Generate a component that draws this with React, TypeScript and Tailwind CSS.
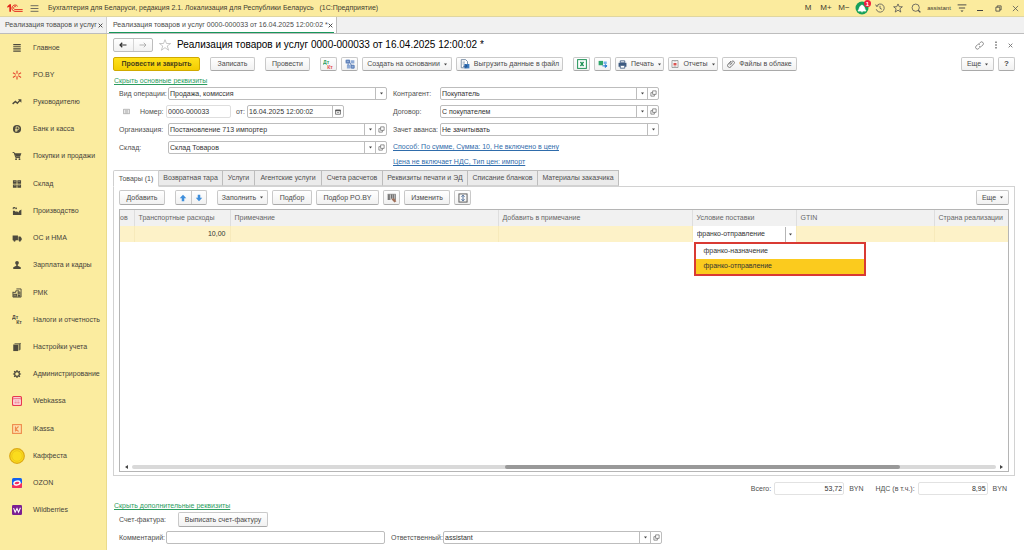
import React from 'react';

type IconProps = { className?: string; children: React.ReactNode; box?: string };
const Svg = ({ className = 'size-[10px]', children, box = '0 0 16 16' }: IconProps) => (
  <svg viewBox={box} className={`shrink-0 ${className}`} fill="none" aria-hidden="true">
    {children}
  </svg>
);

const dark = '#4d4a3d';

const Logo = () => (
  <Svg box="0 0 48 30" className="h-[10px] w-4">
    <path d="M1 10L8 4H12V26H7V11L1 14Z" fill="#e2231a" />
    <path d="M32 10A9.500 9.500 0 1 0 24 25H47" stroke="#e2231a" strokeWidth="3" />
    <path d="M27.500 12A4.500 4.500 0 1 0 24 19.500H47" stroke="#e2231a" strokeWidth="2.500" />
  </Svg>
);

const DtKt = ({ top, bottom }: { top: string; bottom: string }) => (
  <Svg className="size-[11px]">
    <text x="0" y="7" fontSize="7.5" fontWeight="bold" fontFamily="Liberation Sans, sans-serif" fill={top}>Дт</text>
    <text x="6" y="15" fontSize="7.5" fontWeight="bold" fontFamily="Liberation Sans, sans-serif" fill={bottom}>Кт</text>
  </Svg>
);

const Caret = ({ className = 'h-[3px] w-[3px]' }: { className?: string }) => (
  <Svg box="0 0 8 6" className={className}>
    <path d="M0 0.5 H8 L4 5.5 Z" fill="#444" />
  </Svg>
);

const OpenIcon = () => (
  <Svg className="size-[7px]">
    <path d="M6 2 H14 V10 H6 Z M6 6 H2 V14 H10 V10" stroke="#666" strokeWidth="1.6" />
  </Svg>
);

const sections: { name: string; icon: React.ReactNode }[] = [
  { name: 'Главное', icon: <Svg><path d="M2 2.5H14M2 6H14M2 9.5H14M2 13H14" stroke={dark} strokeWidth="1.9" /></Svg> },
  { name: 'PO.BY', icon: <Svg><path d="M8 1V6M8 15V10M1.500 4.500L6 7M14.500 4.500L10 7M1.500 12L6 9M14.500 12L10 9" stroke="#e5432d" strokeWidth="1.8" /></Svg> },
  { name: 'Руководителю', icon: <Svg><path d="M1 11L5.500 7L8.500 10L13 5" stroke={dark} strokeWidth="2.200" /><path d="M9.500 3.500H15V9Z" fill={dark} /></Svg> },
  { name: 'Банк и касса', icon: <Svg><circle cx="8" cy="8" r="6.500" fill={dark} /><path d="M6.500 12.500V4.500H9A2.200 2.200 0 0 1 9 9H5M5 10.800H9" stroke="#fbec9f" strokeWidth="1.300" /></Svg> },
  { name: 'Покупки и продажи', icon: <Svg><path d="M1 2.500H3.500L6 10.500H13" stroke={dark} strokeWidth="1.600" /><path d="M4 3.500H15L13 9H6Z" fill={dark} /><circle cx="6.500" cy="13" r="1.500" fill={dark} /><circle cx="12" cy="13" r="1.500" fill={dark} /></Svg> },
  { name: 'Склад', icon: <Svg><path d="M1.500 2H7.400V7.400H1.500ZM8.600 2H14.500V7.400H8.600ZM1.500 8.600H7.400V14H1.500ZM8.600 8.600H14.500V14H8.600Z" fill={dark} /><path d="M3 4H6M10 4H13M3 10.500H6M10 10.500H13" stroke="#a39c72" /></Svg> },
  { name: 'Производство', icon: <Svg><path d="M1.500 14.500V7.500H4L7 10V8L11 10.500V8L15 5.500V14.500Z" fill={dark} /><path d="M2 5V2.500H5V5M7 2.500V5" stroke={dark} strokeWidth="1.600" /></Svg> },
  { name: 'ОС и НМА', icon: <Svg><path d="M1 4H9.500V11.500H1ZM10.300 5.500H13.500L15.500 8.500V11.500H10.300Z" fill={dark} /><circle cx="4" cy="12" r="1.800" fill={dark} /><circle cx="12.500" cy="12" r="1.800" fill={dark} /></Svg> },
  { name: 'Зарплата и кадры', icon: <Svg><circle cx="8" cy="4.500" r="3" fill={dark} /><path d="M6.800 6H9.200V9L14 11.500V14.500H2V11.500L6.800 9Z" fill={dark} /></Svg> },
  { name: 'РМК', icon: <Svg><path d="M1.500 7H6V4.500H11V7M7 1.500H14.500V14.500H1.500V6" stroke={dark} strokeWidth="1.500" /><path d="M2 9H8V14H2ZM9 6H13.500V14H9Z" fill={dark} /><path d="M10 8H13M10 10.500H13M3 11.500H7" stroke="#d8cc8c" /></Svg> },
  { name: 'Налоги и отчетность', icon: <DtKt top={dark} bottom={dark} /> },
  { name: 'Настройки учета', icon: <Svg><path d="M2 4H10V14.500H2Z" fill={dark} /><path d="M3 3L5 1.500H14V12L11 14V4" fill="#8a845f" /><path d="M11.500 13V3.500L14 2" stroke={dark} /></Svg> },
  { name: 'Администрирование', icon: <Svg><circle cx="8" cy="8" r="3.800" stroke={dark} strokeWidth="2" /><path d="M8 1.500V4M8 12V14.500M1.500 8H4M12 8H14.500M3.400 3.400L5 5M11 11L12.600 12.600M3.400 12.600L5 11M11 5L12.600 3.400" stroke={dark} strokeWidth="1.900" /></Svg> },
  { name: 'Webkassa', icon: <Svg><rect x="1" y="1" width="14" height="14" rx="1.500" fill="#fff" stroke="#e8384f" strokeWidth="2" /><path d="M2 4.500H14" stroke="#e8384f" strokeWidth="1.500" /><path d="M4 8H12M4 11H12" stroke="#e8384f" strokeWidth="1.800" strokeDasharray="2 1" /></Svg> },
  { name: 'iKassa', icon: <Svg><rect x="1" y="1" width="14" height="14" fill="#fde3b0" stroke="#ef8a4a" strokeWidth="1.800" /><path d="M5.500 4V12M10.500 4L6 8L10.500 12" stroke="#ef8a4a" strokeWidth="1.800" /></Svg> },
  { name: 'Каффеста', icon: <Svg className="size-4"><circle cx="8" cy="8" r="7.300" fill="#fbdc1d" stroke="#dca816" strokeWidth="1.200" /><circle cx="8" cy="8" r="5.300" stroke="#e8bd1a" strokeWidth="0.700" /></Svg> },
  { name: 'OZON', icon: <Svg><rect width="16" height="16" rx="2.500" fill="#1261ee" /><path d="M0 11L16 8V13.500A2.500 2.500 0 0 1 13.500 16H2.500A2.500 2.500 0 0 1 0 13.500Z" fill="#f5305d" /><ellipse cx="8" cy="8" rx="5" ry="3" fill="#f5305d" stroke="#fff" strokeWidth="2.200" transform="rotate(-12 8 8)" /></Svg> },
  { name: 'Wildberries', icon: <Svg><rect width="16" height="16" rx="2" fill="#7b1f92" /><path d="M2.500 5L5 11.500L8 5.500L10.500 11.500L13.500 4.500" stroke="#fff" strokeWidth="1.700" /></Svg> },
];

const buttonBase =
  'flex shrink-0 items-center justify-center gap-1 rounded-[2px] border border-[#c9c9c9] border-b-[#a9a9a9] bg-linear-to-b from-white to-[#f1f1f1] h-[14px] whitespace-nowrap text-[#4a4a4a]';

type ButtonProps = { className: string; children: React.ReactNode; label?: string };
const Button = ({ className, children, label }: ButtonProps) => (
  <button type="button" aria-label={label} className={`${buttonBase} ${className}`}>
    {children}
  </button>
);

type FieldProps = { id: string; label: string; value: string; open?: boolean; labelClass: string };
const SelectField = ({ id, label, value, open, labelClass }: FieldProps) => (
  <div className="flex h-[13px] items-center">
    <label htmlFor={id} className={`shrink-0 whitespace-nowrap ${labelClass}`}>{label}</label>
    <div className="flex h-[13px] min-w-0 flex-1 rounded-[2px] border border-[#bdbdbd] bg-white">
      <div className="grid min-w-0 flex-1 grid-cols-[1fr_11px]">
        <select id={id} className="col-span-2 col-start-1 row-start-1 w-full appearance-none bg-transparent px-px text-[#333] outline-none">
          <option>{value}</option>
        </select>
        <span className="pointer-events-none col-start-2 row-start-1 flex items-center justify-center border-l border-[#bdbdbd]">
          <Caret />
        </span>
      </div>
      {open && (
        <button type="button" aria-label={`Открыть: ${label}`} className="flex w-[11px] items-center justify-center border-l border-[#bdbdbd]">
          <OpenIcon />
        </button>
      )}
    </div>
  </div>
);

const TitleBar = () => (
  <header className="flex h-[17px] shrink-0 items-center border-b border-[#e0d6a0] bg-[#fbeb9e] text-[#3f3c30]">
    <div className="flex w-12 items-center gap-[7px] pl-[7px]">
      <Logo />
      <button type="button" aria-label="Главное меню"><Svg className="size-[9px]"><path d="M1 3H15M1 8H15M1 13H15" stroke="#555" strokeWidth="1.500" /></Svg></button>
    </div>
    <span className="whitespace-pre">Бухгалтерия для Беларуси, редакция 2.1. Локализация для Республики Беларусь   (1С:Предприятие)</span>
    <div className="ml-auto flex items-center text-[8px]">
      <button type="button" className="w-[18px]">M</button>
      <button type="button" className="w-[18px]">M+</button>
      <button type="button" className="w-[18px]">M−</button>
      <button type="button" aria-label="Уведомления" className="relative flex w-[18px] justify-center">
        <Svg className="size-[14px]" box="0 0 28 28">
          <circle cx="14" cy="14" r="13" fill="#17a05a" />
          <path d="M6 20C9 17 8 10 14 8C20 10 19 17 22 20ZM12 21.500H16" fill="#fff" stroke="#fff" strokeWidth="1.500" />
        </Svg>
        <span className="absolute -top-px right-0 flex size-[7px] items-center justify-center rounded-full bg-[#ef1c3d] text-[6px] leading-none font-bold text-white">1</span>
      </button>
      <button type="button" aria-label="История" className="flex w-[18px] justify-center"><Svg><path d="M2.500 5A6.500 6.500 0 1 1 2 10M1 2.500L2.500 5.500L5.500 4.500M8 4.500V8.500L11 10" stroke="#555" strokeWidth="1.300" /></Svg></button>
      <button type="button" aria-label="Избранное" className="flex w-[18px] justify-center"><Svg><path d="M8 1.500L10 6H15L11 9.300L12.500 14.500L8 11.500L3.500 14.500L5 9.300L1 6H6Z" stroke="#555" strokeWidth="1.300" /></Svg></button>
      <button type="button" aria-label="Поиск" className="flex w-[18px] justify-center"><Svg><circle cx="7.500" cy="7.500" r="5.800" stroke="#555" strokeWidth="1.300" /><path d="M11.500 11.500L15 15" stroke="#555" strokeWidth="2.200" /></Svg></button>
      <a href="#user" className="w-7 text-center text-[6px]">assistant</a>
      <button type="button" aria-label="Настройки" className="flex w-[18px] justify-center"><Svg><path d="M1 3H15M3 8H13" stroke="#444" strokeWidth="1.500" /><path d="M5.500 12H10.500L8 14.500Z" fill="#444" /></Svg></button>
      <button type="button" aria-label="Свернуть" className="flex w-[18px] justify-center"><Svg className="size-2"><path d="M2 13H14" stroke="#444" strokeWidth="2" /></Svg></button>
      <button type="button" aria-label="Развернуть" className="flex w-[18px] justify-center"><Svg className="size-[7px]"><path d="M2 5H11V14H2ZM5 5V2H14V11H11" stroke="#444" strokeWidth="1.800" /></Svg></button>
      <button type="button" aria-label="Закрыть окно" className="flex w-[17px] justify-center"><Svg className="size-[7px]"><path d="M2 2L14 14M14 2L2 14" stroke="#555" strokeWidth="1.800" /></Svg></button>
    </div>
  </header>
);

const Cross = ({ label, color = '#444' }: { label: string; color?: string }) => (
  <button type="button" aria-label={label} className="flex items-center">
    <Svg className="size-[5px]"><path d="M2 2L14 14M14 2L2 14" stroke={color} strokeWidth="3" /></Svg>
  </button>
);

const WindowTabs = () => (
  <nav className="flex h-[17px] shrink-0 border-b border-[#bdbdbd] bg-[#f1f1f1] text-[#4a4a4a]">
    <div className="flex w-[107px] items-center justify-between border-r border-[#cfcfcf] pr-[3px] pl-[5px]">
      <a href="#list" className="whitespace-nowrap">Реализация товаров и услуг</a>
      <Cross label="Закрыть список" />
    </div>
    <div className="flex w-[230px] border-r border-[#bdbdbd] bg-white px-[2px]">
      <div className="flex flex-1 items-center justify-between border-b border-[#17975a] pt-px pr-px pl-1">
        <a href="#document" className="whitespace-nowrap">Реализация товаров и услуг 0000-000033 от 16.04.2025 12:00:02 *</a>
        <Cross label="Закрыть документ" />
      </div>
    </div>
  </nav>
);

const Sidebar = () => (
  <nav className="flex w-[107px] shrink-0 flex-col border-r border-[#eadb8c] bg-[#fbec9f] pb-[26px] text-[#45423a]">
    {sections.map((s) => (
      <a key={s.name} href="#section" className="flex min-h-4 flex-1 items-center">
        <span className="flex w-[33px] shrink-0 justify-center pl-px">{s.icon}</span>
        <span className="whitespace-nowrap">{s.name}</span>
      </a>
    ))}
  </nav>
);

const DocumentHeader = () => (
  <div className="flex h-[14px] items-center pr-[10px]">
    <div className="flex h-[14px] w-10 rounded-[2px] border border-[#bdbdbd] bg-linear-to-b from-white to-[#f1f1f1]">
      <button type="button" aria-label="Назад" className="flex flex-1 items-center justify-center border-r border-[#d5d5d5]"><Svg className="size-2"><path d="M15 8H2M6.500 3.500L2 8L6.500 12.500" stroke="#333" strokeWidth="2.400" /></Svg></button>
      <button type="button" aria-label="Вперед" className="flex flex-1 items-center justify-center"><Svg className="size-2"><path d="M1 8H14M9.500 3.500L14 8L9.500 12.500" stroke="#aaa" strokeWidth="1.800" /></Svg></button>
    </div>
    <button type="button" aria-label="В избранное" className="ml-[6px]"><Svg className="size-3"><path d="M8 1L10 6H15.500L11 9.300L12.800 15L8 11.500L3.200 15L5 9.300L0.500 6H6Z" stroke="#b5b5b5" strokeWidth="1" /></Svg></button>
    <h1 className="ml-[6px] text-[10px] leading-[14px] whitespace-nowrap text-black">Реализация товаров и услуг 0000-000033 от 16.04.2025 12:00:02 *</h1>
    <div className="ml-auto flex items-center gap-[10px] pr-px">
      <button type="button" aria-label="Ссылка"><Svg className="size-[9px]"><path d="M7 5L9.500 2.500A3 3 0 0 1 14 7L11.500 9.500A3 3 0 0 1 7.500 9.500M9 11L6.500 13.500A3 3 0 0 1 2 9L4.500 6.500A3 3 0 0 1 8.500 6.500" stroke="#666" strokeWidth="1.300" /></Svg></button>
      <button type="button" aria-label="Меню"><Svg className="h-2 w-1" box="0 0 8 16"><path d="M4 1V4M4 6.500V9.500M4 12V15" stroke="#555" strokeWidth="2.500" /></Svg></button>
      <Cross label="Закрыть" color="#777" />
    </div>
  </div>
);

const CommandBar = () => (
  <div className="mt-[5px] flex h-[14px] items-center gap-1 pr-[9px]">
    <button type="button" className="mr-[6px] h-[14px] w-[87px] shrink-0 rounded-[2px] border border-[#d0a900] bg-linear-to-b from-[#ffe11a] to-[#f3cd00] font-bold whitespace-nowrap text-[#4b4218]">Провести и закрыть</button>
    <Button className="mr-[6px] w-[45px]">Записать</Button>
    <Button className="mr-[6px] w-[45px]">Провести</Button>
    <Button className="w-[17px]" label="Движения документа"><DtKt top="#2e9e5b" bottom="#e5494d" /></Button>
    <Button className="w-[17px]" label="Структура подчиненности">
      <Svg><path d="M1 1H8V7H1ZM9 2H15V7H9ZM3 9H9V15H3ZM10 10H15V15H10Z" fill="#8fabd6" /><path d="M2 2H7V6H2ZM10 10H14.500V14.500H10ZM5 7V10M7 5L11 11" stroke="#5579b2" strokeWidth="1.500" /></Svg>
    </Button>
    <Button className="w-[90px]">Создать на основании <Caret /></Button>
    <Button className="mr-[6px] w-[107px]">
      <Svg><path d="M2 1H9L12 4V14H2Z" fill="#fff" stroke="#55708f" strokeWidth="1.200" /><path d="M4 5H8M4 8H8" stroke="#55708f" /><path d="M7 8H15V15H7Z" fill="#3c7bc0" /><path d="M5 11.500H10M8.500 9L11.500 11.500L8.500 14" stroke="#1f4e86" strokeWidth="1.500" /></Svg>
      Выгрузить данные в файл
    </Button>
    <Button className="w-[17px]" label="Excel"><Svg><rect x="1" y="1" width="14" height="14" fill="#fff" stroke="#1f9257" strokeWidth="1.600" /><path d="M5.500 4.500L10.500 11.500M10.500 4.500L5.500 11.500" stroke="#1f9257" strokeWidth="2.300" /></Svg></Button>
    <Button className="w-[17px]" label="Обмен"><Svg><path d="M1 3H8V10H1Z" fill="#2ea66a" /><path d="M9 4H14V8H9Z" fill="#74b3e8" /><path d="M7 11H12M11.500 9L14.500 11L11.500 13.500Z" stroke="#2b7fd0" strokeWidth="1.600" fill="#2b7fd0" /></Svg></Button>
    <Button className="w-[49px]">
      <Svg className="size-[9px]"><path d="M4 1.500H12V5H4Z" fill="#fff" stroke="#3d5a80" strokeWidth="1.500" /><path d="M1 5H15V12H1Z" fill="#3d5a80" /><path d="M4 9.500H12V14.500H4Z" fill="#fff" stroke="#3d5a80" strokeWidth="1.500" /></Svg>
      Печать <Caret />
    </Button>
    <Button className="w-[50px]">
      <Svg className="size-2"><path d="M2 1H14V15H2Z" fill="#fff" stroke="#888" strokeWidth="1.500" /><path d="M5 6H11V11H5Z" fill="#d9534f" /><path d="M5 3.500H11M5 13H11" stroke="#999" /></Svg>
      Отчеты <Caret />
    </Button>
    <Button className="w-[75px]">
      <Svg className="size-2"><path d="M4 9L9.500 3A2.800 2.800 0 0 1 14 7L8 13.500A3.800 3.800 0 0 1 2 8.500L8 2M6 10.500L11 5" stroke="#555" strokeWidth="1.500" /></Svg>
      Файлы в облаке
    </Button>
    <Button className="ml-auto w-[33px]">Еще <Caret /></Button>
    <Button className="w-[17px] text-[8px] font-bold" label="Справка">?</Button>
  </div>
);

const Requisites = () => (
  <div className="mt-px grid grid-cols-[268px_266px] gap-x-[6px] pl-[6px]">
    <div className="flex flex-col gap-[5px]">
      <SelectField id="operation" label="Вид операции:" value="Продажа, комиссия" labelClass="w-[49px]" />
      <div className="flex h-[13px] items-center">
        <span className="flex w-[21px] pl-1"><Svg className="size-[7px]"><path d="M1 3H15V13H1Z" fill="#f3f3f3" stroke="#999" strokeWidth="1.500" /><path d="M4 6H12M4 8.500H12M4 11H12" stroke="#888" /></Svg></span>
        <label htmlFor="number" className="w-[26px]">Номер:</label>
        <input id="number" defaultValue="0000-000033" className="h-[13px] w-[65px] rounded-[2px] border border-[#dedede] px-px text-[#333]" />
        <label htmlFor="date" className="w-4 pl-[5px]">от:</label>
        <div className="flex h-[13px] w-[97px] rounded-[2px] border border-[#bdbdbd]">
          <input id="date" defaultValue="16.04.2025 12:00:02" className="min-w-0 flex-1 px-px text-[#333]" />
          <button type="button" aria-label="Календарь" className="flex w-[11px] items-center justify-center border-l border-[#bdbdbd]"><Svg className="size-[6px]"><path d="M1.500 3H14.500V14H1.500Z" stroke="#555" strokeWidth="2" /><path d="M1 4H15" stroke="#555" strokeWidth="4" /><path d="M5 9.500H11" stroke="#777" strokeWidth="2" /></Svg></button>
        </div>
      </div>
      <SelectField id="organization" label="Организация:" value="Постановление 713 импортер" labelClass="w-[49px]" open />
      <SelectField id="warehouse" label="Склад:" value="Склад Товаров" labelClass="w-[49px]" open />
    </div>
    <div className="flex flex-col gap-[5px]">
      <SelectField id="contractor" label="Контрагент:" value="Покупатель" labelClass="w-[47px]" open />
      <SelectField id="contract" label="Договор:" value="С покупателем" labelClass="w-[47px]" open />
      <SelectField id="advance" label="Зачет аванса:" value="Не зачитывать" labelClass="w-[47px]" />
      <div className="flex flex-col items-start gap-[5px] pt-px text-[#2f6cab] underline">
        <a href="#method" className="leading-[10px]">Способ: По сумме, Сумма: 10, Не включено в цену</a>
        <a href="#price" className="leading-[10px]">Цена не включает НДС, Тип цен: импорт</a>
      </div>
    </div>
  </div>
);

const pages = [
  { name: 'Товары (1)', width: 'w-[46px]' },
  { name: 'Возвратная тара', width: 'w-[65px]' },
  { name: 'Услуги', width: 'w-[33px]' },
  { name: 'Агентские услуги', width: 'w-[68px]' },
  { name: 'Счета расчетов', width: 'w-[62px]' },
  { name: 'Реквизиты печати и ЭД', width: 'w-[86px]' },
  { name: 'Списание бланков', width: 'w-[71px]' },
  { name: 'Материалы заказчика', width: 'w-[82px]' },
];

const PageTabs = () => (
  <div role="tablist" className="relative flex pr-[9px]">
    {pages.map((p, i) => (
      <button
        key={p.name}
        type="button"
        role="tab"
        aria-selected={i === 0}
        className={`-mr-px border whitespace-nowrap ${p.width} ${i === 0 ? 'z-10 -mb-px h-[17px] rounded-tl-[2px] border-[#cfcfcf] border-b-white bg-white' : 'h-4 border-[#bdbdbd] border-b-[#d2d2d2] bg-[#ebebeb]'}`}
      >
        {p.name}
      </button>
    ))}
  </div>
);

const BlueArrow = ({ down }: { down?: boolean }) => (
  <Svg className="size-2">
    <path d={down ? 'M5.500 1.500H10.500V7.500H14.500L8 14.500L1.500 7.500H5.500Z' : 'M5.500 14.500H10.500V8.500H14.500L8 1.500L1.500 8.500H5.500Z'} fill="#3f8fdc" />
  </Svg>
);

const GoodsBar = () => (
  <div className="flex h-[15px] items-center gap-1">
    <Button className="mr-[6px] h-[15px] w-[46px]">Добавить</Button>
    <div className="mr-[6px] flex h-[15px] w-8 rounded-[2px] border border-[#c9c9c9] border-b-[#a9a9a9] bg-linear-to-b from-white to-[#f1f1f1]">
      <button type="button" aria-label="Вверх" className="flex flex-1 items-center justify-center border-r border-[#c9c9c9]"><BlueArrow /></button>
      <button type="button" aria-label="Вниз" className="flex flex-1 items-center justify-center"><BlueArrow down /></button>
    </div>
    <Button className="h-[15px] w-[51px]">Заполнить <Caret /></Button>
    <Button className="h-[15px] w-10">Подбор</Button>
    <Button className="h-[15px] w-[63px]">Подбор PO.BY</Button>
    <Button className="h-[15px] w-[17px]" label="Штрихкод"><Svg><path d="M2 2V11M4.500 2V11M7.500 2V9M10 2V9M13 2V11" stroke="#555" strokeWidth="1.700" /><path d="M1 2H14" stroke="#777" /><path d="M7 10L11 8L15 13L12 15Z" fill="#a0705a" /></Svg></Button>
    <Button className="h-[15px] w-[46px]">Изменить</Button>
    <Button className="h-[15px] w-[17px]" label="Высота строк"><Svg><rect x="1.500" y="1.500" width="13" height="13" stroke="#555" strokeWidth="1.500" /><path d="M8 3.500V12.500M5.500 6L8 3.500L10.500 6M5.500 10L8 12.500L10.500 10" stroke="#3b5f8f" strokeWidth="1.400" /></Svg></Button>
    <Button className="ml-auto h-[15px] w-[33px]">Еще <Caret /></Button>
  </div>
);

const GoodsTable = () => (
  <div className="mt-1 flex flex-1 flex-col border border-[#b5b5b5] bg-white">
    <table className="w-full table-fixed border-collapse text-left">
      <colgroup>
        <col className="w-[14px]" />
        <col className="w-[96px]" />
        <col />
        <col className="w-[194px]" />
        <col className="w-[104px]" />
        <col className="w-[138px]" />
        <col className="w-[74px]" />
      </colgroup>
      <thead>
        <tr className="h-4 bg-[#f1f1f1] text-[#666] [&>th]:border-r [&>th]:border-[#dedede] [&>th]:p-0 [&>th]:pl-1 [&>th]:font-normal [&>th]:whitespace-nowrap [&>th:last-child]:border-r-0">
          <th><span className="-ml-1">ов</span></th>
          <th>Транспортные расходы</th>
          <th>Примечание</th>
          <th>Добавить в примечание</th>
          <th>Условие поставки</th>
          <th>GTIN</th>
          <th>Страна реализации</th>
        </tr>
      </thead>
      <tbody>
        <tr className="h-4 bg-[#fdf2c8] text-[#333] [&>td]:border-r [&>td]:border-[#f7eabb] [&>td]:p-0 [&>td:last-child]:border-r-0">
          <td />
          <td><div className="pr-1 text-right">10,00</div></td>
          <td />
          <td />
          <td className="bg-white">
            <div className="relative flex h-[15px]">
              <input aria-label="Условие поставки" role="combobox" aria-expanded="true" aria-controls="terms" defaultValue="франко-отправление" className="min-w-0 flex-1 pl-1 outline-none" />
              <button type="button" aria-label="Выбрать" className="flex w-[11px] items-center justify-center border-l border-[#b5b5b5]"><Caret /></button>
              <ul id="terms" role="listbox" className="absolute top-[15px] left-px z-20 w-[172px] border-2 border-[#d93a33] bg-white">
                <li role="option" aria-selected="false" className="flex h-[15px] items-center pl-2">франко-назначение</li>
                <li role="option" aria-selected="true" className="flex h-[15px] items-center bg-[#fbcb1e] pl-2">франко-отправление</li>
              </ul>
            </div>
          </td>
          <td />
          <td />
        </tr>
      </tbody>
    </table>
    <div className="mt-auto flex h-2 items-center gap-1 px-[5px]">
      <Svg className="h-1 w-[3px]" box="0 0 6 8"><path d="M6 0V8L0 4Z" fill="#444" /></Svg>
      <div className="grid h-1 flex-1 grid-cols-[374fr_397fr_96fr] rounded-full bg-[#d9d9d9]">
        <div className="col-start-2 rounded-full bg-[#999]" />
      </div>
      <Svg className="h-1 w-[3px]" box="0 0 6 8"><path d="M0 0V8L6 4Z" fill="#444" /></Svg>
    </div>
  </div>
);

const Totals = () => (
  <div className="mt-[6px] flex h-[13px] items-center justify-end pr-[17px]">
    <label htmlFor="total">Всего:</label>
    <input id="total" readOnly defaultValue="53,72" className="ml-[3px] h-[13px] w-[70px] rounded-[2px] border border-[#e2e2e2] px-px text-right text-[#333]" />
    <span className="ml-[5px]">BYN</span>
    <label htmlFor="vat" className="ml-3">НДС (в т.ч.):</label>
    <input id="vat" readOnly defaultValue="8,95" className="ml-[3px] h-[13px] w-[70px] rounded-[2px] border border-[#e2e2e2] px-px text-right text-[#333]" />
    <span className="ml-[5px]">BYN</span>
  </div>
);

export default function App() {
  return (
    <div className="flex min-h-screen flex-col overflow-x-hidden bg-white font-['Liberation_Sans',sans-serif] text-[7px] leading-[10px] text-[#4f4f4f]">
      <TitleBar />
      <WindowTabs />
      <div className="flex flex-1">
        <Sidebar />
        <main className="flex min-w-0 flex-1 flex-col pt-1 pb-[6px] pl-[6px]">
          <DocumentHeader />
          <CommandBar />
          <a href="#main-details" className="mt-[5px] self-start pl-px text-[#2c9d5f] underline">Скрыть основные реквизиты</a>
          <Requisites />
          <div className="mt-[3px] flex flex-1 flex-col">
            <PageTabs />
            <section className="mr-[9px] flex flex-1 flex-col border border-[#d2d2d2] px-[5px] pt-[3px] pb-[3px]">
              <GoodsBar />
              <GoodsTable />
            </section>
          </div>
          <Totals />
          <a href="#extra-details" className="mt-[6px] self-start pl-px text-[#2c9d5f] underline">Скрыть дополнительные реквизиты</a>
          <div className="mt-px flex items-center pl-[6px]">
            <span className="w-[59px]">Счет-фактура:</span>
            <Button className="h-[15px] w-[90px]">Выписать счет-фактуру</Button>
          </div>
          <div className="mt-1 flex h-[13px] items-center pl-[6px]">
            <label htmlFor="comment" className="w-[47px]">Комментарий:</label>
            <input id="comment" className="mr-[6px] h-[13px] w-[219px] rounded-[2px] border border-[#bdbdbd] px-px" />
            <div className="w-[271px]">
              <SelectField id="responsible" label="Ответственный:" value="assistant" labelClass="w-[52px]" open />
            </div>
          </div>
        </main>
      </div>
    </div>
  );
}
